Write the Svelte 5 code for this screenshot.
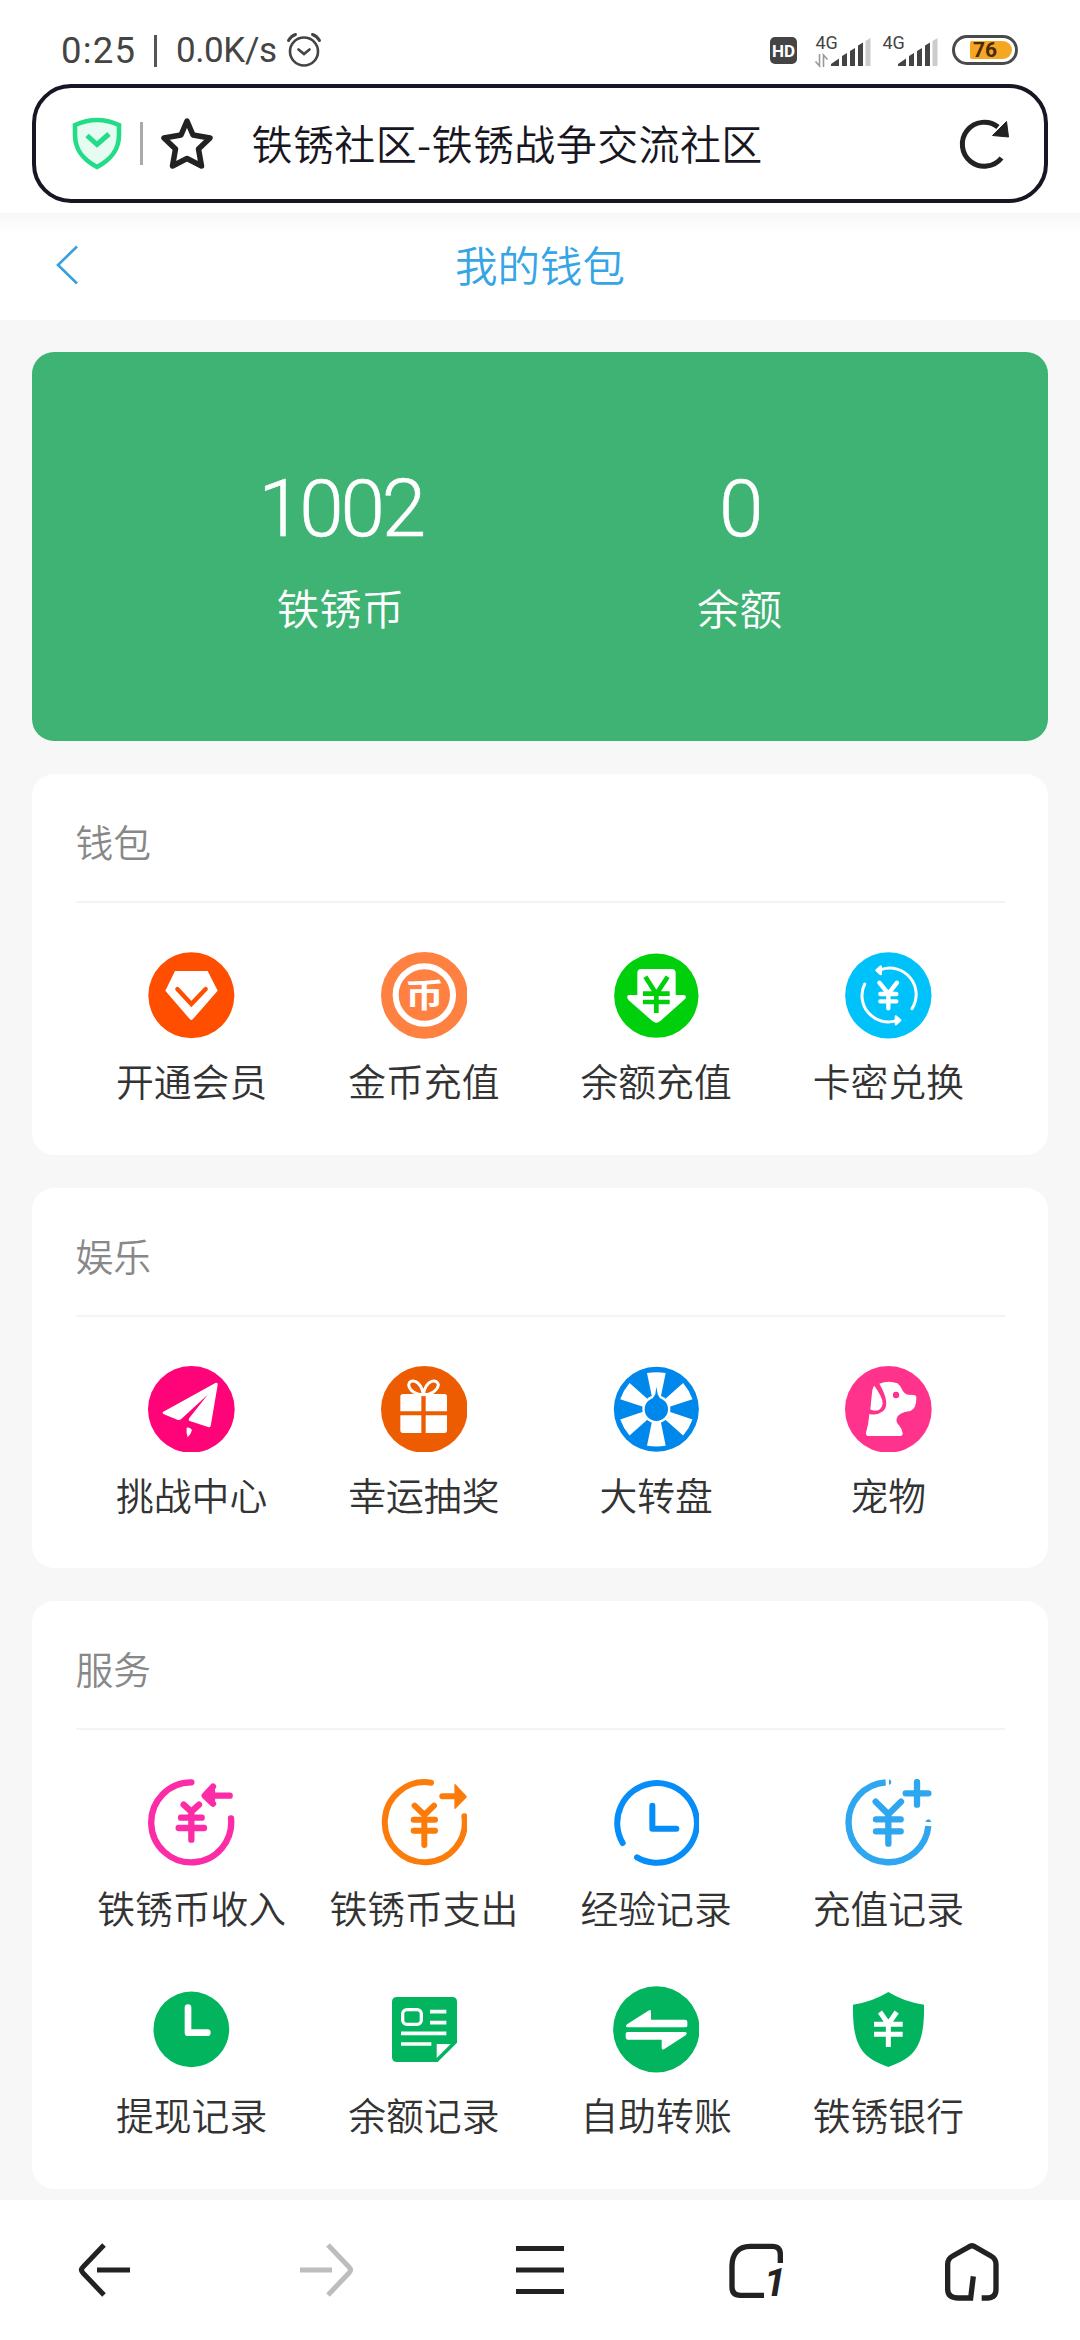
<script lang="ts">
  type Item = { label: string; icon: string };
  type Section = { title: string; items: Item[] };

  const url = '铁锈社区-铁锈战争交流社区';

  const balances = [
    { value: 1002, label: '铁锈币' },
    { value: 0, label: '余额' }
  ];

  // icon artwork, drawn around 0,0 in a 260 unit box
  const icons: Record<string, string> = {
    vip: `<circle r="129" fill="#ff4e00"/>
      <path d="M-49 -73H49L79 -14L4 72Q0 76 -4 72L-78 -14Z" fill="#fff"/>
      <path d="M-42 -19L0 26L43 -19" fill="none" stroke="#ff4e00" stroke-width="13" stroke-linecap="round"/>`,
    coin: `<circle r="130" fill="#ff8142"/>
      <circle cy="-1" r="86" fill="none" stroke="#fff" stroke-width="18"/>
      <text y="36" transform="scale(1.1 0.93)" text-anchor="middle" font-size="106" font-weight="700" fill="#fff">币</text>`,
    topup: `<circle cy="1" r="126.500" fill="#00cf0c"/>
      <path d="M-57 -1V-67Q-57 -79 -45 -79H46Q58 -79 58 -67V-1H83Q93 2 86 11L12 77Q0 87 -12 77L-83 15Q-92 3 -83 -1Z" fill="#fff"/>
      <path d="M-33 -56L0 -4L34 -56M-40 -5H40M-40 20H40M0 -4V53" fill="none" stroke="#00cf0c" stroke-width="14"/>`,
    exchange: `<circle r="129.500" fill="#00c2fb"/>
      <g fill="none" stroke="#fff" stroke-linecap="round">
        <path d="M-22 -77A79 79 0 0 1 71 40M-71 -34A79 79 0 0 0 24 76" stroke-width="9"/>
        <path d="M-27 -38L0 -5L26 -38M-24 -4H24M-24 18H24M0 0V39" stroke-width="13"/>
        <path d="M-35 -75L-23 -86V-64ZM35 75L23 86V64Z" fill="#fff" stroke-width="8" stroke-linejoin="round"/>
      </g>`,
    plane: `<circle r="130" fill="#ff0378"/>
      <path d="M-84 7L72 -79Q80 -82 79 -74L58 50Q56 55 50 53L-7 34Q-9 30 -6 26L49 -44L-31 30Q-36 33 -42 31L-84 14Q-89 10 -84 7Z" fill="#fff"/>
      <path d="M-14 55Q-4 52 2 62Q0 72 -11 84Q-16 72 -14 55Z" fill="#fff"/>`,
    gift: `<circle r="130" fill="#ed5c00"/>
      <path d="M-9 -46V6H-72V-38Q-72 -46 -64 -46ZM4 -46H60Q68 -46 68 -38V6H4ZM-72 18H-9V71H-64Q-72 71 -72 63ZM4 18H68V63Q68 71 60 71H4Z" fill="#fff"/>
      <path d="M-3 -44C-24 -44 -46 -56 -47 -74C-44 -92 -13 -92 -3 -46C7 -92 38 -92 42 -74C40 -56 20 -44 -3 -44Z" fill="none" stroke="#fff" stroke-width="9"/>`,
    wheel: `<circle r="127.500" fill="#0087ec"/>
      ${[0, 60, 120, 180, 240, 300]
        .map((a) => `<path d="M-28 -109Q0 -114 28 -109L13 -36H-13Z" fill="#fff" transform="rotate(${a})"/>`)
        .join('')}
      <circle r="42" fill="#fff"/>
      <circle r="35" fill="#0087ec"/>
      <path d="M-12 -32L-3 -45L0 -68L4 -45L12 -32Z" fill="#0087ec"/>`,
    dog: `<circle r="130" fill="#ff328c"/>
      <path d="M-27 -77Q0 -88 27 -78Q38 -70 42 -58Q48 -46 60 -44L76 -43Q84 -43 84 -35Q84 -2 66 5Q28 10 25 28Q22 38 32 48Q42 60 43 72Q43 80 36 80H-58Q-68 80 -67 70Q-59 44 -57 14Q-35 20 -16 6Q8 -16 -27 -77Z" fill="#fff"/>
      <path d="M-42 -71Q-16 -34 -17 -18Q-19 4 -40 4Q-50 4 -54 0L-49 -50Q-47 -66 -42 -71Z" fill="#fff"/>
      <circle cx="23" cy="-43" r="9.500" fill="#ff328c"/>`,
    income: `<g fill="none" stroke="#fc2ca6" stroke-width="19" stroke-linecap="round" stroke-linejoin="round">
        <path d="M0 -120A120 120 0 1 0 119 -12"/>
        <path d="M45 -80H115M65 -107L40 -80L65 -56"/>
        <path d="M50 -80L62 -94V-68Z"/>
        <path d="M-23 -53L0 -32L23 -53M-31 -14H31M-38 17H38M0 -28V52"/>
      </g>`,
    expense: `<g fill="none" stroke="#fb7c0a" stroke-width="18" stroke-linecap="round">
        <path d="M20 -119A120 120 0 1 0 120 -18"/>
        <path d="M54 -78H92"/>
        <path d="M-29 -50L0 -22L29 -50M-32 -8H32M-32 25H32M0 -12V68"/>
      </g>
      <path d="M90 -112Q90 -117 95 -113L126 -80Q128 -77 126 -74L95 -42Q90 -38 90 -43Z" fill="#fb7c0a"/>`,
    experience: `<g fill="none" stroke="#068df8" stroke-width="18" stroke-linecap="round">
        <path d="M-101 62A119.500 119.500 0 1 1 -58 105"/>
        <path d="M-12 -50V19H60" stroke-linejoin="round"/>
      </g>`,
    recharge: `<g fill="none" stroke="#2ea6f0" stroke-width="19">
        <path d="M-8 -120A120 120 0 1 0 120 11"/>
        <path d="M86 -121V-53M52 -87H120M-38 -62L0 -24L38 -62M-37 -9H37M-37 27H37M0 -20V64" stroke-linecap="round"/>
      </g>
      <path d="M2 -129Q9 -127 9 -120Q9 -114 2 -112ZM111 -1Q114 -9 120 -9Q127 -8 129 -1Z" fill="#2ea6f0"/>`,
    withdraw: `<circle r="113.500" fill="#02b45e"/>
      <path d="M-10 -65V10H48" fill="none" stroke="#fff" stroke-width="20" stroke-linecap="round" stroke-linejoin="round"/>`,
    bill: `<path d="M-82 -97H84Q98 -97 98 -83V40L40 98H-82Q-97 98 -97 83V-83Q-97 -97 -82 -97Z" fill="#02b45e"/>
      <rect x="-65" y="-59" width="56" height="44" rx="13" fill="none" stroke="#fff" stroke-width="10"/>
      <path d="M17 -53H66M17 -20H66M-70 12H66M-70 44H21" stroke="#fff" stroke-width="11"/>
      <path d="M37 44H79L37 86Z" fill="#fff"/>`,
    transfer: `<circle r="129.500" fill="#02b45e"/>
      <path d="M-88 -15L-24 -56Q-16 -61 -16 -52V-29H86Q93 -29 93 -22V-11Q93 -6 87 -6H-86Q-95 -6 -88 -15Z" fill="#fff"/>
      <path d="M88 18L24 59Q16 64 16 55V31H-86Q-92 31 -92 24V13Q-92 8 -86 8H86Q95 9 88 18Z" fill="#fff"/>`,
    bank: `<path d="M0 -112Q46 -83 107 -74V-50C105 68 64 88 0 113C-64 88 -104 68 -106 -50V-74Q-46 -83 0 -112Z" fill="#02b45e"/>
      <path d="M-25 -52L0 -16L25 -52M-43 -15H43M-43 15H43M0 -18V53" fill="none" stroke="#fff" stroke-width="15"/>`
  };

  const sections: Section[] = [
    {
      title: '钱包',
      items: [
        { label: '开通会员', icon: 'vip' },
        { label: '金币充值', icon: 'coin' },
        { label: '余额充值', icon: 'topup' },
        { label: '卡密兑换', icon: 'exchange' }
      ]
    },
    {
      title: '娱乐',
      items: [
        { label: '挑战中心', icon: 'plane' },
        { label: '幸运抽奖', icon: 'gift' },
        { label: '大转盘', icon: 'wheel' },
        { label: '宠物', icon: 'dog' }
      ]
    },
    {
      title: '服务',
      items: [
        { label: '铁锈币收入', icon: 'income' },
        { label: '铁锈币支出', icon: 'expense' },
        { label: '经验记录', icon: 'experience' },
        { label: '充值记录', icon: 'recharge' },
        { label: '提现记录', icon: 'withdraw' },
        { label: '余额记录', icon: 'bill' },
        { label: '自助转账', icon: 'transfer' },
        { label: '铁锈银行', icon: 'bank' }
      ]
    }
  ];
</script>

{#snippet signal(data: boolean)}
  <svg class="signal" width="56" height="36" viewBox="0 -4 56 36">
    <text x="0.500" y="13" font-size="18" fill="#444">4G</text>
    {#if data}
      <path d="M4.500 18V30L0.500 25.500M8.500 31V19L12.500 23.500" fill="none" stroke="#999" stroke-width="1.600" />
    {/if}
    <path d="M16 30V28L24 22.500V30ZM27 30V20L32 17V30ZM35 30V15L40 12V30ZM43 30V9.500L48 6.500V30Z" fill="#444" />
    <path d="M50.500 30V5L55.500 2V30Z" fill="#ccc" />
  </svg>
{/snippet}

<main class="screen">
  <div class="status">
    <div class="statusLeft">
      <span class="time">0:25</span>
      <span class="bar"></span>
      <span class="speed">0.0K/s</span>
      <svg width="36" height="36" viewBox="0 0 36 36" fill="none" stroke="#444" stroke-linecap="round">
        <circle cx="18" cy="19.500" r="14" stroke-width="2.600" />
        <path d="M12.500 17.500L18 22L23.500 17.500" stroke-width="2.600" />
        <path d="M2.500 8.500Q5 4 9.500 2.500M33.500 8.500Q31 4 26.500 2.500" stroke-width="3" />
      </svg>
    </div>
    <div class="statusRight">
      <span class="hd">HD</span>
      {@render signal(true)}
      {@render signal(false)}
      <span class="battery"><span class="charge">76</span></span>
    </div>
  </div>

  <div class="addressBar">
    <div class="address">
      <svg width="50" height="54" viewBox="0 0 50 54">
        <path d="M3 8Q25 -2 47 8V18C47 34 38 43 25 50C12 43 3 34 3 18Z" fill="#e6fbf1" stroke="#22dc86" stroke-width="4.600" />
        <path d="M15 18.500L25 27.500L37 17" fill="none" stroke="#22dc86" stroke-width="5" />
      </svg>
      <span class="divider"></span>
      <svg class="star" width="54" height="54" viewBox="0 0 54 54">
        <path d="M27 4L33 18L50 21L38.500 32L41.500 49L27 41.500L12.500 49L15.500 32L4 21L21 18Z" fill="none" stroke="#222" stroke-width="5.500" stroke-linejoin="round" />
      </svg>
      <span class="url">{url}</span>
      <svg width="54" height="54" viewBox="0 0 54 54">
        <path d="M43.500 41A22 22 0 1 1 40 10" fill="none" stroke="#222" stroke-width="5" />
        <path d="M48.500 4.500L50.500 20L34.500 18.500Z" fill="#222" stroke="#222" stroke-linejoin="round" />
      </svg>
    </div>
  </div>

  <header class="header">
    <svg width="24" height="40" viewBox="0 0 24 40">
      <path d="M22 1.500L3 20L22 38.500" fill="none" stroke="#3a9fdd" stroke-width="2.600" />
    </svg>
    <h1>我的钱包</h1>
  </header>

  <div class="content">
    <section class="balance">
      {#each balances as balance}
        <div class="amount">
          <strong>{balance.value}</strong>
          <span>{balance.label}</span>
        </div>
      {/each}
    </section>

    {#each sections as section}
      <section class="card">
        <h2>{section.title}</h2>
        <div class="grid">
          {#each section.items as item}
            <div class="item">
              <svg class="icon" viewBox="-130 -130 260 260">{@html icons[item.icon]}</svg>
              <span>{item.label}</span>
            </div>
          {/each}
        </div>
      </section>
    {/each}
  </div>

  <nav class="toolbar">
    <svg viewBox="-33 -33 66 66" stroke="#222" stroke-width="5">
      <path d="M-4 -25L-25 -3Q-28 0 -25 3L-4 25M-11 0H22" />
    </svg>
    <svg viewBox="-33 -33 66 66" stroke="#bdbdbd" stroke-width="5">
      <path d="M4 -25L25 -3Q28 0 25 3L4 25M8 0H-24" />
    </svg>
    <svg viewBox="-33 -33 66 66" stroke="#222" stroke-width="5">
      <path d="M-24 -21.500H24M-24 0H24M-24 21.500H24" />
    </svg>
    <svg viewBox="69 78 198 198" stroke="#222" stroke-width="16">
      <path d="M241 156V130Q241 106 217 106H150C115 106 96 130 96 165V228Q96 253 121 253H192" />
      <text class="tabs" x="192" y="255">1</text>
    </svg>
    <svg viewBox="717 78 198 198" stroke="#222" stroke-width="16">
      <path d="M845 261H862Q888 261 888 235V160Q888 143 873 135L826 108Q816 101 806 108L758 135Q743 143 743 160V235Q743 261 775 261H812L820 196" />
    </svg>
  </nav>
</main>

<style>
  :global(body) {
    background: #f7f7f7;
  }

  .screen {
    display: flex;
    flex-direction: column;
    width: 1080px;
    height: 2340px;
    overflow: hidden;
    color: #333;
    font-family: "Noto Sans CJK SC", sans-serif;
    font-weight: 350;
    background: #f7f7f7;
  }

  .status {
    display: flex;
    justify-content: space-between;
    height: 84px;
    box-sizing: border-box;
    padding: 32px 62px 0 61px;
    color: #444;
    font-family: Roboto, sans-serif;
    font-weight: 400;
    background: #fff;
  }

  .statusLeft,
  .statusRight {
    display: flex;
    align-items: center;
    height: 36px;
  }

  .time {
    width: 74px;
    font-size: 36.5px;
    letter-spacing: 1.2px;
  }

  .bar {
    width: 3px;
    height: 32px;
    margin: 2px 19px 0;
    background: #555;
  }

  .speed {
    width: 110px;
    font-size: 35px;
    letter-spacing: -0.4px;
    white-space: nowrap;
  }

  .hd {
    width: 27px;
    height: 27px;
    margin-right: 18px;
    border-radius: 5px;
    background: #444;
    color: #fff;
    font: bold 17px/28px Roboto, sans-serif;
    text-align: center;
  }

  .signal {
    margin-right: 11px;
    overflow: visible;
  }

  .battery {
    display: flex;
    box-sizing: border-box;
    width: 66px;
    height: 30px;
    margin-left: 3px;
    padding: 3px 3px 3px 15px;
    border: 3px solid #4a4a4a;
    border-radius: 15px;
  }

  .charge {
    flex: 1;
    padding-left: 3px;
    border-radius: 2px 9px 9px 2px;
    background: #f5a623;
    color: #4a2a08;
    font: bold 21px/19px Roboto, sans-serif;
  }

  .addressBar {
    flex: none;
    padding: 0 32px 10px;
    background: #fff;
  }

  .address {
    display: flex;
    align-items: center;
    box-sizing: border-box;
    height: 119px;
    padding: 0 32px 0 36px;
    border: 4px solid #181622;
    border-radius: 39px;
  }

  .divider {
    width: 2.5px;
    height: 43px;
    margin: 0 17px 0 18px;
    background: #aaa;
  }

  .star {
    margin-right: 38px;
  }

  .url {
    flex: 1;
    margin-bottom: 3px;
    color: #181622;
    font-size: 41px;
    letter-spacing: 0.4px;
    white-space: nowrap;
  }

  .header {
    display: grid;
    grid-template-columns: 24px 1fr 24px;
    align-items: center;
    flex: none;
    box-sizing: border-box;
    height: 107px;
    padding: 0 55px 4px;
    background: linear-gradient(#f6f6f6, #fafafa 6px, #fdfdfd 14px, #fff 24px);
  }

  h1 {
    margin: 0 0 2px;
    color: #35a5e6;
    font-size: 42.5px;
    font-weight: 350;
    line-height: 60px;
    text-align: center;
  }

  .content {
    display: flex;
    flex-direction: column;
    flex: none;
    gap: 33px;
    height: 1879.5px;
    box-sizing: border-box;
    padding: 32px 32px 0;
  }

  .balance {
    display: flex;
    justify-content: center;
    box-sizing: border-box;
    height: 389px;
    padding: 115px 109px 0;
    border-radius: 22px;
    background: #3eb373;
    color: #fff;
  }

  .amount {
    display: flex;
    flex: 1;
    flex-direction: column;
    align-items: center;
  }

  .amount strong {
    font-family: Roboto, sans-serif;
    font-size: 80px;
    font-weight: 300;
    letter-spacing: -3.2px;
    line-height: 84px;
    -webkit-text-stroke: 0.6px #fff;
  }

  .amount span {
    margin-top: 29px;
    font-size: 42.5px;
    line-height: 54px;
  }

  .card {
    box-sizing: border-box;
    padding: 0 43.5px 32.5px;
    border-radius: 22px;
    background: #fff;
  }

  h2 {
    height: 127px;
    margin: 0;
    border-bottom: 2px solid #f4f4f4;
    color: #888;
    font-size: 37.8px;
    font-weight: 350;
    line-height: 133px;
  }

  .grid {
    display: grid;
    grid-template-columns: repeat(4, 1fr);
    padding-top: 49px;
    row-gap: 37px;
  }

  .item {
    display: flex;
    flex-direction: column;
    align-items: center;
    height: 170px;
  }

  .icon {
    width: 86.7px;
    height: 86.7px;
  }

  .item span {
    margin-top: 14.5px;
    font-size: 37.8px;
    line-height: 54px;
    white-space: nowrap;
  }

  .toolbar {
    display: grid;
    grid-template-columns: repeat(5, 1fr);
    align-items: center;
    justify-items: center;
    flex: 1;
    background: #fff;
  }

  .toolbar svg {
    width: 66px;
    height: 66px;
    fill: none;
    overflow: visible;
  }

  .toolbar .tabs {
    fill: #222;
    stroke: none;
    font: italic bold 118px Roboto, sans-serif;
  }
</style>
